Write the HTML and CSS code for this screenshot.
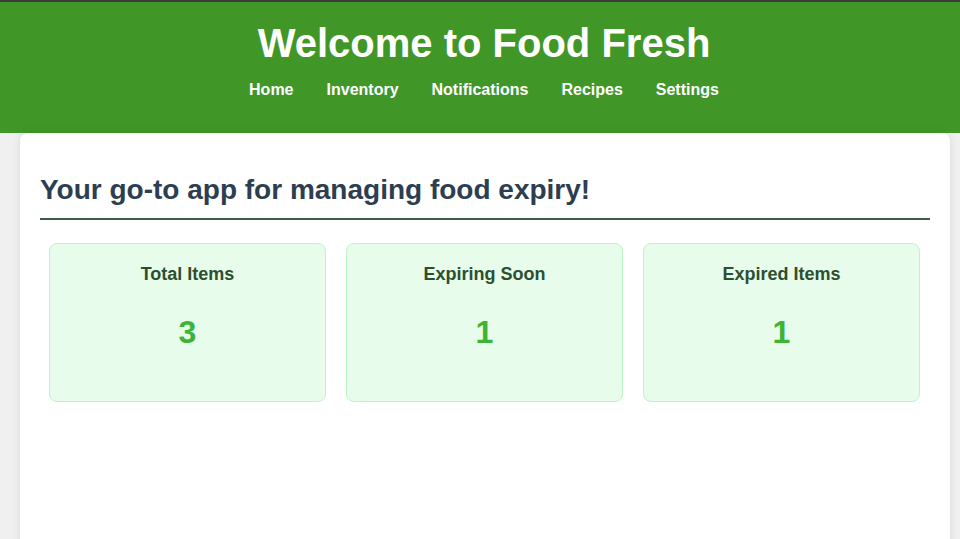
FILE: index.html
```html
<!DOCTYPE html>
<html lang="en">
<head>
<meta charset="UTF-8">
<title>Food Fresh</title>
<link rel="stylesheet" href="styles.css">
</head>
<body>
<header class="site-header">
  <h1 class="site-title">Welcome to Food Fresh</h1>
  <nav class="site-nav">
    <a href="#">Home</a>
    <a href="#">Inventory</a>
    <a href="#">Notifications</a>
    <a href="#">Recipes</a>
    <a href="#">Settings</a>
  </nav>
</header>
<main class="container">
  <h2 class="tagline">Your go-to app for managing food expiry!</h2>
  <section class="stats">
    <div class="card">
      <h3 class="card-title">Total Items</h3>
      <p class="card-value">3</p>
    </div>
    <div class="card">
      <h3 class="card-title">Expiring Soon</h3>
      <p class="card-value">1</p>
    </div>
    <div class="card">
      <h3 class="card-title">Expired Items</h3>
      <p class="card-value">1</p>
    </div>
  </section>
</main>
</body>
</html>
```
FILE: styles.css
```css
* { box-sizing: border-box; }
html, body { height: 100%; }
body {
  margin: 0;
  font-family: "Liberation Sans", Arial, sans-serif;
  background: #f0f0f0;
}
.site-header {
  background: #409727;
  border-top: 2px solid #3b3b3b;
  color: #fff;
  text-align: center;
  padding: 18px 20px 33px 28px;
}
.site-title {
  margin: 0;
  font-size: 40px;
  line-height: 46px;
  font-weight: bold;
}
.site-nav {
  display: flex;
  justify-content: center;
  gap: 33px;
  margin-top: 14px;
}
.site-nav a {
  color: #fff;
  text-decoration: none;
  font-weight: bold;
  font-size: 16px;
  line-height: 20px;
}
.container {
  margin: 0 10px 0 20px;
  background: #fff;
  border-radius: 8px;
  box-shadow: 0 0 10px rgba(0,0,0,0.1);
  padding: 20px;
  min-height: 420px;
}
.tagline {
  margin: 19px 0 0;
  font-size: 28px;
  line-height: 36px;
  color: #2c3e50;
  border-bottom: 2px solid #3d5b45;
  padding-bottom: 10px;
}
.stats {
  display: flex;
  gap: 20px;
  padding: 23px 10px 0 9px;
}
.card {
  flex: 1;
  height: 159px;
  background: #e8fcec;
  border: 1px solid #bdf5c5;
  border-radius: 8px;
  text-align: center;
  padding: 19px 20px 20px;
}
.card-title {
  margin: 0;
  font-size: 18px;
  line-height: 22px;
  color: #2d4f30;
}
.card-value {
  margin: 27px 0 0;
  font-size: 32px;
  line-height: 40px;
  font-weight: bold;
  color: #3cb534;
}
```
